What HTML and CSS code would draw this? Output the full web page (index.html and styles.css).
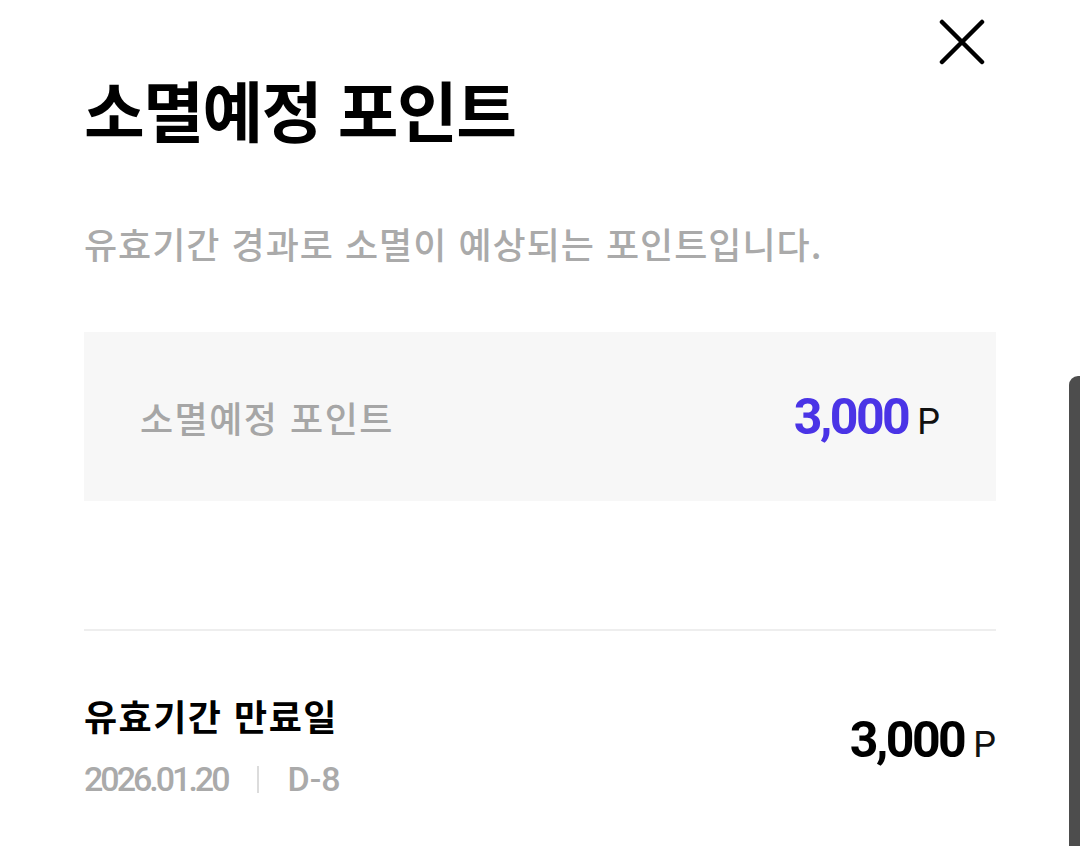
FILE: index.html
```html
<!DOCTYPE html>
<html lang="ko">

<head>
  <meta charset="UTF-8" />
  <meta name="viewport" content="width=device-width, initial-scale=1.0" />
  <title>소멸예정 포인트</title>
  <link rel="stylesheet" href="styles.css">
</head>

<body>

  <div class="sheet">
    <div class="top-bar">
      <button class="close-btn" aria-label="닫기">
        <svg width="46" height="46" viewBox="0 0 46 46">
          <path d="M3 3 L43 43 M43 3 L3 43" stroke="#000" stroke-width="4.5" stroke-linecap="round" fill="none" />
        </svg>
      </button>
    </div>

    <h1 class="title">소멸예정 포인트</h1>
    <p class="desc">유효기간 경과로 소멸이 예상되는 포인트입니다.</p>

    <div class="summary-box">
      <span class="summary-label">소멸예정 포인트</span>
      <span class="amount">
        <span class="num blue">3,000</span><span class="unit">P</span>
      </span>
    </div>

    <div class="divider"></div>

    <div class="expire-row">
      <div class="expire-info">
        <div class="expire-title">유효기간 만료일</div>
        <div class="expire-meta">
          <span class="date">2026.01.20</span>
          <span class="sep"></span>
          <span class="dday">D-8</span>
        </div>
      </div>
      <span class="amount">
        <span class="num">3,000</span><span class="unit">P</span>
      </span>
    </div>
  </div>

  <div class="scroll-handle"></div>

</body>

</html>
```

FILE: styles.css
```css
body {
  margin: 0;
  padding: 0;
  background: #fff;
  font-family: "Noto Sans CJK KR", "Noto Sans", sans-serif;
  color: #000;
  overflow: hidden;
}

.sheet {
  padding: 0 84px;
}

.top-bar {
  height: 84px;
  display: flex;
  justify-content: flex-end;
  align-items: center;
}

.close-btn {
  width: 46px;
  height: 46px;
  padding: 0;
  margin-right: 11px;
  border: none;
  background: none;
  cursor: pointer;
  display: flex;
}

.title {
  margin: -16px 0 0;
  font-size: 66px;
  font-weight: 700;
  line-height: 80px;
  letter-spacing: -1.5px;
}

.desc {
  margin: 73px 0 0;
  font-size: 36px;
  font-weight: 500;
  line-height: 44px;
  letter-spacing: 1px;
  color: #aaa;
}

.summary-box {
  margin-top: 67px;
  height: 169px;
  padding: 0 56px;
  background: #f7f7f7;
  display: flex;
  align-items: center;
  justify-content: space-between;
}

.summary-label {
  font-size: 36px;
  font-weight: 500;
  letter-spacing: 1.5px;
  color: #a6a6a6;
}

.amount {
  display: flex;
  align-items: baseline;
}

.num {
  font-family: Roboto, "Noto Sans", sans-serif;
  font-size: 50px;
  font-weight: 700;
  letter-spacing: -2.5px;
}

.num.blue {
  color: #4a34e6;
}

.unit {
  margin-left: 9px;
  font-family: Roboto, "Noto Sans", sans-serif;
  font-size: 36px;
  color: #111;
}

.divider {
  margin-top: 128px;
  height: 2px;
  background: #eeeeee;
}

.expire-row {
  margin-top: 60px;
  display: flex;
  justify-content: space-between;
  align-items: center;
}

.expire-row .amount {
  margin-bottom: 10px;
}

.expire-title {
  font-size: 36px;
  font-weight: 700;
  line-height: 48px;
  letter-spacing: 1.5px;
}

.expire-meta {
  margin-top: 20px;
  display: flex;
  align-items: center;
  font-family: Roboto, "Noto Sans", sans-serif;
  font-size: 34px;
  font-weight: 500;
  color: #aaa;
}

.date {
  letter-spacing: -3px;
}

.sep {
  width: 2px;
  height: 27px;
  margin: 0 29px;
  background: #dcdcdc;
}

.scroll-handle {
  position: absolute;
  top: 376px;
  right: 0;
  width: 11px;
  height: 470px;
  background: #4d4d4d;
  border-top-left-radius: 9px;
}
```
